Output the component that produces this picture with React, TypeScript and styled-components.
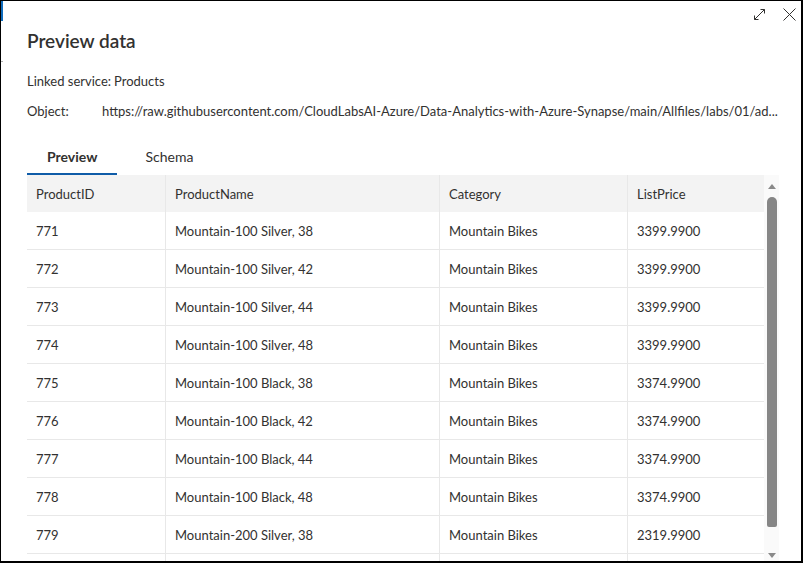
import React from 'react';
import styled, { createGlobalStyle } from 'styled-components';

const GlobalStyle = createGlobalStyle`
  html, body {
    margin: 0;
    padding: 0;
    background: #ffffff;
  }
  * {
    box-sizing: border-box;
  }
`;

type Product = {
  id: number;
  name: string;
  category: string;
  price: string;
};

const products: Product[] = [
  { id: 771, name: 'Mountain-100 Silver, 38', category: 'Mountain Bikes', price: '3399.9900' },
  { id: 772, name: 'Mountain-100 Silver, 42', category: 'Mountain Bikes', price: '3399.9900' },
  { id: 773, name: 'Mountain-100 Silver, 44', category: 'Mountain Bikes', price: '3399.9900' },
  { id: 774, name: 'Mountain-100 Silver, 48', category: 'Mountain Bikes', price: '3399.9900' },
  { id: 775, name: 'Mountain-100 Black, 38', category: 'Mountain Bikes', price: '3374.9900' },
  { id: 776, name: 'Mountain-100 Black, 42', category: 'Mountain Bikes', price: '3374.9900' },
  { id: 777, name: 'Mountain-100 Black, 44', category: 'Mountain Bikes', price: '3374.9900' },
  { id: 778, name: 'Mountain-100 Black, 48', category: 'Mountain Bikes', price: '3374.9900' },
  { id: 779, name: 'Mountain-200 Silver, 38', category: 'Mountain Bikes', price: '2319.9900' },
];

const columns = ['ProductID', 'ProductName', 'Category', 'ListPrice'];

const Window = styled.div`
  width: 803px;
  height: 563px;
  display: flex;
  background: #ffffff;
  border-style: solid;
  border-color: #000000;
  border-width: 1px 2px 2px 1px;
  overflow: hidden;
  font-family: Lato, 'Open Sans', sans-serif;
  color: #323130;
`;

const SideRail = styled.div`
  width: 2px;
  flex: none;
  display: flex;
  flex-direction: column;
`;

const RailAccent = styled.div`
  height: 20px;
  background: #0f6cbd;
`;

const RailTick = styled.div`
  margin-top: 40px;
  height: 1px;
  background: #b0b0b0;
`;

const Content = styled.div`
  flex: 1;
  min-width: 0;
  display: flex;
  flex-direction: column;
  padding-left: 24px;
  padding-right: 22px;
`;

const TopBar = styled.div`
  height: 21px;
  padding-top: 7px;
  margin-right: -17px;
  display: flex;
  justify-content: flex-end;
  gap: 17px;
`;

const IconButton = styled.span`
  width: 13px;
  height: 13px;
  display: flex;
  svg {
    display: block;
  }
`;

const Title = styled.h1`
  margin: 7px 0 0;
  height: 24px;
  line-height: 24px;
  font-size: 19px;
  font-weight: 600;
  color: #323130;
`;

const InfoRow = styled.div<{ $top: number }>`
  display: flex;
  gap: 3px;
  margin-top: ${(p) => p.$top}px;
  height: 20px;
  line-height: 20px;
  font-size: 13px;
  white-space: nowrap;
`;

const InfoLabel = styled.span`
  min-width: 72px;
  flex: none;
`;

const InfoValue = styled.span`
  overflow: hidden;
`;

const TabList = styled.div`
  display: flex;
  gap: 8px;
  margin-top: 20px;
  height: 34px;
`;

const Tab = styled.div<{ $active?: boolean }>`
  padding: 0 20px 2px;
  display: flex;
  align-items: center;
  font-size: 14px;
  font-weight: ${(p) => (p.$active ? 700 : 400)};
  color: #323130;
  border-bottom: 2px solid ${(p) => (p.$active ? '#0f5ca8' : 'transparent')};
`;

const GridArea = styled.div`
  flex: 1;
  min-height: 0;
  display: flex;
`;

const Table = styled.div`
  width: 737px;
  flex: none;
  overflow: hidden;
  font-size: 13px;
`;

const Row = styled.div<{ $header?: boolean }>`
  display: grid;
  grid-template-columns: 138px 274px 188px 137px;
  height: ${(p) => (p.$header ? 37 : 38)}px;
  background: ${(p) => (p.$header ? '#f3f3f3' : '#ffffff')};
  border-bottom: ${(p) => (p.$header ? 'none' : '1px solid #e8e8e8')};
`;

const Cell = styled.div<{ $header?: boolean }>`
  display: flex;
  align-items: center;
  padding-left: 9px;
  white-space: nowrap;
  overflow: hidden;
  & + & {
    border-left: 1px solid ${(p) => (p.$header ? 'transparent' : '#e8e8e8')};
  }
`;

const ScrollTrack = styled.div`
  width: 15px;
  flex: none;
  background: #fafafa;
  display: flex;
  flex-direction: column;
  align-items: center;
  padding: 9px 0 3px 1px;
`;

const Arrow = styled.div<{ $down?: boolean }>`
  width: 0;
  height: 0;
  border-left: 4px solid transparent;
  border-right: 4px solid transparent;
  ${(p) =>
    p.$down
      ? 'border-top: 5px solid #8a8a8a;'
      : 'border-bottom: 5px solid #8a8a8a;'}
`;

const Thumb = styled.div`
  width: 10px;
  height: 330px;
  margin-top: 8px;
  background: #868686;
  border-radius: 5px 5px 2px 2px;
`;

const TrackSpace = styled.div`
  flex: 1;
`;

const ExpandIcon = () => (
  <svg width="13" height="13" viewBox="0 0 13 13" fill="none" stroke="#323130" strokeWidth="1">
    <path d="M1.5 11.5 L11.5 1.5 M7.5 1.5 H11.5 V5.5 M1.5 7.5 V11.5 H5.5" />
  </svg>
);

const CloseIcon = () => (
  <svg width="13" height="13" viewBox="0 0 13 13" fill="none" stroke="#323130" strokeWidth="1">
    <path d="M0.5 0.5 L12.5 12.5 M12.5 0.5 L0.5 12.5" />
  </svg>
);

export default function App() {
  return (
    <>
      <GlobalStyle />
      <Window>
        <SideRail>
          <RailAccent />
          <RailTick />
        </SideRail>
        <Content>
          <TopBar>
            <IconButton>
              <ExpandIcon />
            </IconButton>
            <IconButton>
              <CloseIcon />
            </IconButton>
          </TopBar>
          <Title>Preview data</Title>
          <InfoRow $top={18}>
            <InfoLabel>Linked service:</InfoLabel>
            <InfoValue>Products</InfoValue>
          </InfoRow>
          <InfoRow $top={10}>
            <InfoLabel>Object:</InfoLabel>
            <InfoValue>
              https://raw.githubusercontent.com/CloudLabsAI-Azure/Data-Analytics-with-Azure-Synapse/main/Allfiles/labs/01/ad...
            </InfoValue>
          </InfoRow>
          <TabList>
            <Tab $active>Preview</Tab>
            <Tab>Schema</Tab>
          </TabList>
          <GridArea>
            <Table>
              <Row $header>
                {columns.map((c) => (
                  <Cell $header key={c}>
                    {c}
                  </Cell>
                ))}
              </Row>
              {products.map((p) => (
                <Row key={p.id}>
                  <Cell>{p.id}</Cell>
                  <Cell>{p.name}</Cell>
                  <Cell>{p.category}</Cell>
                  <Cell>{p.price}</Cell>
                </Row>
              ))}
              {/* next row starts just above the bottom edge; only its borders show */}
              <Row>
                <Cell />
                <Cell />
                <Cell />
                <Cell />
              </Row>
            </Table>
            <ScrollTrack>
              <Arrow />
              <Thumb />
              <TrackSpace />
              <Arrow $down />
            </ScrollTrack>
          </GridArea>
        </Content>
      </Window>
    </>
  );
}
